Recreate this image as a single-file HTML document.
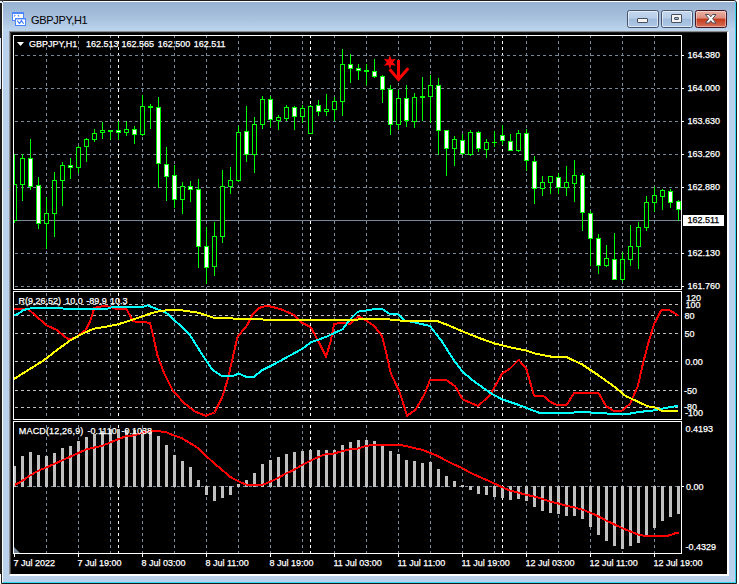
<!DOCTYPE html>
<html><head><meta charset="utf-8"><title>GBPJPY,H1</title>
<style>
html,body{margin:0;padding:0;background:#ffffff;}
body{width:739px;height:584px;overflow:hidden;position:relative;font-family:"Liberation Sans",sans-serif;}
#win{position:absolute;left:1px;top:0;width:736px;height:584px;box-sizing:border-box;background:#b9d1ea;border:1px solid #1c1c1c;border-radius:3px 3px 0 0;overflow:hidden;}
#win .hl{position:absolute;left:0;top:0;right:0;bottom:0;border:1px solid #fff;border-right-color:#35d6f0;border-bottom-color:#35d6f0;border-radius:2px 2px 0 0;}
#cap{position:absolute;left:1px;top:1px;right:1px;height:29px;background:linear-gradient(#97b2d2,#a9c2de 60%,#bdd5ee);}
#title{position:absolute;left:31px;top:12px;font-size:11px;letter-spacing:-0.3px;color:#000;line-height:16px;white-space:nowrap;}
#client{position:absolute;left:9px;top:31px;width:720px;height:545px;background:#000;box-sizing:border-box;border-left:1px solid #909090;border-top:1px solid #8a8a8a;border-right:2px solid #fff;border-bottom:2px solid #fff;}
.btn{position:absolute;top:10px;width:32px;height:18px;box-sizing:border-box;border:1px solid #46556f;border-radius:2.5px;background:linear-gradient(#c3d6ee 0,#b7cde9 45%,#9fbbdc 50%,#b0c8e6 100%);box-shadow:inset 0 0 0 1px rgba(255,255,255,.55);}
#bclose{border-color:#431422;background:linear-gradient(#eab2a4 0,#dc8c7c 45%,#c5391a 50%,#d6705a 100%);box-shadow:inset 0 0 0 1px rgba(255,255,255,.4);}
.g{position:absolute;box-sizing:border-box;border:1px solid #4a4f5e;background:#f4f4f4;border-radius:1px;}
</style></head><body>
<div id="win"><div class="hl"></div><div id="cap"></div></div>
<div id="client"></div>
<div style="position:absolute;left:10px;top:32px;width:1px;height:542px;background:#444"></div><div style="position:absolute;left:10px;top:32px;width:717px;height:1px;background:#1e1e1e"></div>
<div style="position:absolute;left:0;top:0;width:1px;height:584px;background:#1c1c1c"></div><div style="position:absolute;left:0;top:38px;width:1px;height:51px;background:#dfeaf8"></div><div style="position:absolute;left:0;top:574px;width:1px;height:10px;background:#fff"></div><div style="position:absolute;left:0;top:1px;width:2px;height:2px;background:#dfeaf8"></div><div style="position:absolute;left:0;top:0;width:4px;height:1px;background:#3a3a3a"></div><div style="position:absolute;left:2px;top:1px;width:1px;height:1px;background:#3a3a3a"></div>
<svg width="16" height="16" style="position:absolute;left:11px;top:11px" shape-rendering="crispEdges">
<rect x="1" y="1" width="12" height="9" fill="#fff" stroke="none"/>
<rect x="1.5" y="1.5" width="11" height="8" fill="none" stroke="#4a86ff"/>
<rect x="1" y="1" width="12" height="2" fill="#4a86ff"/>
<rect x="4" y="7" width="11" height="8" fill="#fff"/>
<rect x="4.5" y="7.5" width="10" height="7" fill="none" stroke="#4a86ff"/>
<rect x="4" y="8" width="11" height="1" fill="#4a86ff" opacity="0.45"/>
<path d="M6.3,9.6 L8.4,12.6 L10.4,9.6 L12.6,12.8" fill="none" stroke="#3a78ff" stroke-width="1.1" shape-rendering="auto"/>
<path d="M3,5.5 L4.2,4.2 M7,4.2 L8.2,5.5" fill="none" stroke="#3a78ff" stroke-width="1.1" shape-rendering="auto"/>
</svg>
<div id="title">GBPJPY,H1</div>
<div class="btn" id="bmin" style="left:627px"><div class="g" style="left:9px;top:7px;width:11px;height:5px"></div></div>
<div class="btn" id="bmax" style="left:661px"><div class="g" style="left:9px;top:3px;width:11px;height:9px"></div><div class="g" style="left:12px;top:6px;width:5px;height:3px;background:#9db9dc"></div></div>
<div class="btn" id="bclose" style="left:695px"><svg width="30" height="16" style="position:absolute;left:0;top:0"><path d="M9.5,3.5 L13,3.5 L14.75,5.8 L16.5,3.5 L20,3.5 L16.6,7.75 L20,12 L16.5,12 L14.75,9.7 L13,12 L9.5,12 L12.9,7.75 Z" fill="#fff" stroke="#4a4f5e" stroke-width="1" stroke-linejoin="round"/></svg></div>
<svg id="chart" width="739" height="584" viewBox="0 0 739 584" style="position:absolute;left:0;top:0">
<defs>
<clipPath id="cpM"><rect x="14" y="36" width="667" height="253"/></clipPath>
<clipPath id="cp1"><rect x="14" y="292" width="667" height="127"/></clipPath>
<clipPath id="cp2"><rect x="14" y="422" width="667" height="131"/></clipPath>
</defs>
<g shape-rendering="crispEdges" stroke-width="1" fill="none">
<line x1="46.5" x2="46.5" y1="36" y2="289" stroke="#778899" stroke-dasharray="3 3" stroke-dashoffset="1"/>
<line x1="78.5" x2="78.5" y1="36" y2="289" stroke="#778899" stroke-dasharray="3 3" stroke-dashoffset="1"/>
<line x1="110.5" x2="110.5" y1="36" y2="289" stroke="#778899" stroke-dasharray="3 3" stroke-dashoffset="1"/>
<line x1="142.5" x2="142.5" y1="36" y2="289" stroke="#778899" stroke-dasharray="3 3" stroke-dashoffset="1"/>
<line x1="174.5" x2="174.5" y1="36" y2="289" stroke="#778899" stroke-dasharray="3 3" stroke-dashoffset="1"/>
<line x1="206.5" x2="206.5" y1="36" y2="289" stroke="#778899" stroke-dasharray="3 3" stroke-dashoffset="1"/>
<line x1="238.5" x2="238.5" y1="36" y2="289" stroke="#778899" stroke-dasharray="3 3" stroke-dashoffset="1"/>
<line x1="270.5" x2="270.5" y1="36" y2="289" stroke="#778899" stroke-dasharray="3 3" stroke-dashoffset="1"/>
<line x1="302.5" x2="302.5" y1="36" y2="289" stroke="#778899" stroke-dasharray="3 3" stroke-dashoffset="1"/>
<line x1="334.5" x2="334.5" y1="36" y2="289" stroke="#778899" stroke-dasharray="3 3" stroke-dashoffset="1"/>
<line x1="366.5" x2="366.5" y1="36" y2="289" stroke="#778899" stroke-dasharray="3 3" stroke-dashoffset="1"/>
<line x1="398.5" x2="398.5" y1="36" y2="289" stroke="#778899" stroke-dasharray="3 3" stroke-dashoffset="1"/>
<line x1="430.5" x2="430.5" y1="36" y2="289" stroke="#778899" stroke-dasharray="3 3" stroke-dashoffset="1"/>
<line x1="462.5" x2="462.5" y1="36" y2="289" stroke="#778899" stroke-dasharray="3 3" stroke-dashoffset="1"/>
<line x1="494.5" x2="494.5" y1="36" y2="289" stroke="#778899" stroke-dasharray="3 3" stroke-dashoffset="1"/>
<line x1="526.5" x2="526.5" y1="36" y2="289" stroke="#778899" stroke-dasharray="3 3" stroke-dashoffset="1"/>
<line x1="558.5" x2="558.5" y1="36" y2="289" stroke="#778899" stroke-dasharray="3 3" stroke-dashoffset="1"/>
<line x1="590.5" x2="590.5" y1="36" y2="289" stroke="#778899" stroke-dasharray="3 3" stroke-dashoffset="1"/>
<line x1="622.5" x2="622.5" y1="36" y2="289" stroke="#778899" stroke-dasharray="3 3" stroke-dashoffset="1"/>
<line x1="654.5" x2="654.5" y1="36" y2="289" stroke="#778899" stroke-dasharray="3 3" stroke-dashoffset="1"/>
<line x1="118.5" x2="118.5" y1="36" y2="289" stroke="#ffffff" stroke-dasharray="3 3" stroke-dashoffset="1"/>
<line x1="310.5" x2="310.5" y1="36" y2="289" stroke="#ffffff" stroke-dasharray="3 3" stroke-dashoffset="1"/>
<line x1="502.5" x2="502.5" y1="36" y2="289" stroke="#ffffff" stroke-dasharray="3 3" stroke-dashoffset="1"/>
<line x1="46.5" x2="46.5" y1="292" y2="419" stroke="#778899" stroke-dasharray="3 3" stroke-dashoffset="5"/>
<line x1="78.5" x2="78.5" y1="292" y2="419" stroke="#778899" stroke-dasharray="3 3" stroke-dashoffset="5"/>
<line x1="110.5" x2="110.5" y1="292" y2="419" stroke="#778899" stroke-dasharray="3 3" stroke-dashoffset="5"/>
<line x1="142.5" x2="142.5" y1="292" y2="419" stroke="#778899" stroke-dasharray="3 3" stroke-dashoffset="5"/>
<line x1="174.5" x2="174.5" y1="292" y2="419" stroke="#778899" stroke-dasharray="3 3" stroke-dashoffset="5"/>
<line x1="206.5" x2="206.5" y1="292" y2="419" stroke="#778899" stroke-dasharray="3 3" stroke-dashoffset="5"/>
<line x1="238.5" x2="238.5" y1="292" y2="419" stroke="#778899" stroke-dasharray="3 3" stroke-dashoffset="5"/>
<line x1="270.5" x2="270.5" y1="292" y2="419" stroke="#778899" stroke-dasharray="3 3" stroke-dashoffset="5"/>
<line x1="302.5" x2="302.5" y1="292" y2="419" stroke="#778899" stroke-dasharray="3 3" stroke-dashoffset="5"/>
<line x1="334.5" x2="334.5" y1="292" y2="419" stroke="#778899" stroke-dasharray="3 3" stroke-dashoffset="5"/>
<line x1="366.5" x2="366.5" y1="292" y2="419" stroke="#778899" stroke-dasharray="3 3" stroke-dashoffset="5"/>
<line x1="398.5" x2="398.5" y1="292" y2="419" stroke="#778899" stroke-dasharray="3 3" stroke-dashoffset="5"/>
<line x1="430.5" x2="430.5" y1="292" y2="419" stroke="#778899" stroke-dasharray="3 3" stroke-dashoffset="5"/>
<line x1="462.5" x2="462.5" y1="292" y2="419" stroke="#778899" stroke-dasharray="3 3" stroke-dashoffset="5"/>
<line x1="494.5" x2="494.5" y1="292" y2="419" stroke="#778899" stroke-dasharray="3 3" stroke-dashoffset="5"/>
<line x1="526.5" x2="526.5" y1="292" y2="419" stroke="#778899" stroke-dasharray="3 3" stroke-dashoffset="5"/>
<line x1="558.5" x2="558.5" y1="292" y2="419" stroke="#778899" stroke-dasharray="3 3" stroke-dashoffset="5"/>
<line x1="590.5" x2="590.5" y1="292" y2="419" stroke="#778899" stroke-dasharray="3 3" stroke-dashoffset="5"/>
<line x1="622.5" x2="622.5" y1="292" y2="419" stroke="#778899" stroke-dasharray="3 3" stroke-dashoffset="5"/>
<line x1="654.5" x2="654.5" y1="292" y2="419" stroke="#778899" stroke-dasharray="3 3" stroke-dashoffset="5"/>
<line x1="118.5" x2="118.5" y1="292" y2="419" stroke="#ffffff" stroke-dasharray="3 3" stroke-dashoffset="5"/>
<line x1="310.5" x2="310.5" y1="292" y2="419" stroke="#ffffff" stroke-dasharray="3 3" stroke-dashoffset="5"/>
<line x1="502.5" x2="502.5" y1="292" y2="419" stroke="#ffffff" stroke-dasharray="3 3" stroke-dashoffset="5"/>
<line x1="46.5" x2="46.5" y1="422" y2="553" stroke="#778899" stroke-dasharray="3 3" stroke-dashoffset="3"/>
<line x1="78.5" x2="78.5" y1="422" y2="553" stroke="#778899" stroke-dasharray="3 3" stroke-dashoffset="3"/>
<line x1="110.5" x2="110.5" y1="422" y2="553" stroke="#778899" stroke-dasharray="3 3" stroke-dashoffset="3"/>
<line x1="142.5" x2="142.5" y1="422" y2="553" stroke="#778899" stroke-dasharray="3 3" stroke-dashoffset="3"/>
<line x1="174.5" x2="174.5" y1="422" y2="553" stroke="#778899" stroke-dasharray="3 3" stroke-dashoffset="3"/>
<line x1="206.5" x2="206.5" y1="422" y2="553" stroke="#778899" stroke-dasharray="3 3" stroke-dashoffset="3"/>
<line x1="238.5" x2="238.5" y1="422" y2="553" stroke="#778899" stroke-dasharray="3 3" stroke-dashoffset="3"/>
<line x1="270.5" x2="270.5" y1="422" y2="553" stroke="#778899" stroke-dasharray="3 3" stroke-dashoffset="3"/>
<line x1="302.5" x2="302.5" y1="422" y2="553" stroke="#778899" stroke-dasharray="3 3" stroke-dashoffset="3"/>
<line x1="334.5" x2="334.5" y1="422" y2="553" stroke="#778899" stroke-dasharray="3 3" stroke-dashoffset="3"/>
<line x1="366.5" x2="366.5" y1="422" y2="553" stroke="#778899" stroke-dasharray="3 3" stroke-dashoffset="3"/>
<line x1="398.5" x2="398.5" y1="422" y2="553" stroke="#778899" stroke-dasharray="3 3" stroke-dashoffset="3"/>
<line x1="430.5" x2="430.5" y1="422" y2="553" stroke="#778899" stroke-dasharray="3 3" stroke-dashoffset="3"/>
<line x1="462.5" x2="462.5" y1="422" y2="553" stroke="#778899" stroke-dasharray="3 3" stroke-dashoffset="3"/>
<line x1="494.5" x2="494.5" y1="422" y2="553" stroke="#778899" stroke-dasharray="3 3" stroke-dashoffset="3"/>
<line x1="526.5" x2="526.5" y1="422" y2="553" stroke="#778899" stroke-dasharray="3 3" stroke-dashoffset="3"/>
<line x1="558.5" x2="558.5" y1="422" y2="553" stroke="#778899" stroke-dasharray="3 3" stroke-dashoffset="3"/>
<line x1="590.5" x2="590.5" y1="422" y2="553" stroke="#778899" stroke-dasharray="3 3" stroke-dashoffset="3"/>
<line x1="622.5" x2="622.5" y1="422" y2="553" stroke="#778899" stroke-dasharray="3 3" stroke-dashoffset="3"/>
<line x1="654.5" x2="654.5" y1="422" y2="553" stroke="#778899" stroke-dasharray="3 3" stroke-dashoffset="3"/>
<line x1="118.5" x2="118.5" y1="422" y2="553" stroke="#ffffff" stroke-dasharray="3 3" stroke-dashoffset="3"/>
<line x1="310.5" x2="310.5" y1="422" y2="553" stroke="#ffffff" stroke-dasharray="3 3" stroke-dashoffset="3"/>
<line x1="502.5" x2="502.5" y1="422" y2="553" stroke="#ffffff" stroke-dasharray="3 3" stroke-dashoffset="3"/>
<line x1="15" x2="681" y1="55.5" y2="55.5" stroke="#778899" stroke-dasharray="3 3"/>
<line x1="15" x2="681" y1="88.5" y2="88.5" stroke="#778899" stroke-dasharray="3 3"/>
<line x1="15" x2="681" y1="121.5" y2="121.5" stroke="#778899" stroke-dasharray="3 3"/>
<line x1="15" x2="681" y1="154.5" y2="154.5" stroke="#778899" stroke-dasharray="3 3"/>
<line x1="15" x2="681" y1="187.5" y2="187.5" stroke="#778899" stroke-dasharray="3 3"/>
<line x1="15" x2="681" y1="253.5" y2="253.5" stroke="#778899" stroke-dasharray="3 3"/>
<line x1="15" x2="681" y1="286.5" y2="286.5" stroke="#778899" stroke-dasharray="3 3"/>
<line x1="15" x2="681" y1="304.5" y2="304.5" stroke="#c0c0c0" stroke-dasharray="3 3"/>
<line x1="15" x2="681" y1="315.5" y2="315.5" stroke="#c0c0c0" stroke-dasharray="3 3"/>
<line x1="15" x2="681" y1="333.5" y2="333.5" stroke="#c0c0c0" stroke-dasharray="3 3"/>
<line x1="15" x2="681" y1="361.5" y2="361.5" stroke="#c0c0c0" stroke-dasharray="3 3"/>
<line x1="15" x2="681" y1="390.5" y2="390.5" stroke="#c0c0c0" stroke-dasharray="3 3"/>
<line x1="15" x2="681" y1="407.5" y2="407.5" stroke="#c0c0c0" stroke-dasharray="3 3"/>
<line x1="15" x2="681" y1="486.5" y2="486.5" stroke="#778899" stroke-dasharray="3 3"/>
<line x1="14" x2="681" y1="220.5" y2="220.5" stroke="#778899"/>
</g>
<g shape-rendering="crispEdges" clip-path="url(#cpM)">
<rect x="14" y="154" width="1" height="69" fill="#00ff00"/>
<rect x="12" y="184" width="5" height="37" fill="#00ff00"/>
<rect x="13" y="185" width="3" height="35" fill="#000000"/>
<rect x="22" y="154" width="1" height="47" fill="#00ff00"/>
<rect x="20" y="158" width="5" height="27" fill="#00ff00"/>
<rect x="21" y="159" width="3" height="25" fill="#000000"/>
<rect x="30" y="139" width="1" height="51" fill="#00ff00"/>
<rect x="28" y="158" width="5" height="29" fill="#00ff00"/>
<rect x="29" y="159" width="3" height="27" fill="#ffffff"/>
<rect x="38" y="177" width="1" height="52" fill="#00ff00"/>
<rect x="36" y="185" width="5" height="39" fill="#00ff00"/>
<rect x="37" y="186" width="3" height="37" fill="#ffffff"/>
<rect x="46" y="197" width="1" height="52" fill="#00ff00"/>
<rect x="44" y="213" width="5" height="11" fill="#00ff00"/>
<rect x="45" y="214" width="3" height="9" fill="#000000"/>
<rect x="54" y="172" width="1" height="65" fill="#00ff00"/>
<rect x="52" y="180" width="5" height="34" fill="#00ff00"/>
<rect x="53" y="181" width="3" height="32" fill="#000000"/>
<rect x="62" y="162" width="1" height="44" fill="#00ff00"/>
<rect x="60" y="165" width="5" height="16" fill="#00ff00"/>
<rect x="61" y="166" width="3" height="14" fill="#000000"/>
<rect x="70" y="158" width="1" height="21" fill="#00ff00"/>
<rect x="68" y="165" width="5" height="3" fill="#00ff00"/>
<rect x="69" y="166" width="3" height="1" fill="#ffffff"/>
<rect x="78" y="146" width="1" height="27" fill="#00ff00"/>
<rect x="76" y="147" width="5" height="21" fill="#00ff00"/>
<rect x="77" y="148" width="3" height="19" fill="#000000"/>
<rect x="86" y="138" width="1" height="24" fill="#00ff00"/>
<rect x="84" y="139" width="5" height="8" fill="#00ff00"/>
<rect x="85" y="140" width="3" height="6" fill="#000000"/>
<rect x="94" y="129" width="1" height="13" fill="#00ff00"/>
<rect x="92" y="133" width="5" height="7" fill="#00ff00"/>
<rect x="93" y="134" width="3" height="5" fill="#000000"/>
<rect x="102" y="122" width="1" height="17" fill="#00ff00"/>
<rect x="100" y="130" width="5" height="3" fill="#00ff00"/>
<rect x="101" y="131" width="3" height="1" fill="#000000"/>
<rect x="110" y="130" width="1" height="10" fill="#00ff00"/>
<rect x="108" y="130" width="5" height="2" fill="#00ff00"/>
<rect x="118" y="121" width="1" height="19" fill="#00ff00"/>
<rect x="116" y="130" width="5" height="3" fill="#00ff00"/>
<rect x="117" y="131" width="3" height="1" fill="#ffffff"/>
<rect x="126" y="121" width="1" height="15" fill="#00ff00"/>
<rect x="124" y="129" width="5" height="4" fill="#00ff00"/>
<rect x="125" y="130" width="3" height="2" fill="#000000"/>
<rect x="134" y="126" width="1" height="18" fill="#00ff00"/>
<rect x="132" y="129" width="5" height="6" fill="#00ff00"/>
<rect x="133" y="130" width="3" height="4" fill="#ffffff"/>
<rect x="142" y="95" width="1" height="41" fill="#00ff00"/>
<rect x="140" y="106" width="5" height="29" fill="#00ff00"/>
<rect x="141" y="107" width="3" height="27" fill="#000000"/>
<rect x="150" y="104" width="1" height="25" fill="#00ff00"/>
<rect x="148" y="106" width="5" height="2" fill="#00ff00"/>
<rect x="158" y="97" width="1" height="91" fill="#00ff00"/>
<rect x="156" y="107" width="5" height="57" fill="#00ff00"/>
<rect x="157" y="108" width="3" height="55" fill="#ffffff"/>
<rect x="166" y="147" width="1" height="54" fill="#00ff00"/>
<rect x="164" y="164" width="5" height="13" fill="#00ff00"/>
<rect x="165" y="165" width="3" height="11" fill="#ffffff"/>
<rect x="174" y="165" width="1" height="43" fill="#00ff00"/>
<rect x="172" y="175" width="5" height="25" fill="#00ff00"/>
<rect x="173" y="176" width="3" height="23" fill="#ffffff"/>
<rect x="182" y="182" width="1" height="32" fill="#00ff00"/>
<rect x="180" y="186" width="5" height="14" fill="#00ff00"/>
<rect x="181" y="187" width="3" height="12" fill="#000000"/>
<rect x="190" y="181" width="1" height="21" fill="#00ff00"/>
<rect x="188" y="186" width="5" height="4" fill="#00ff00"/>
<rect x="189" y="187" width="3" height="2" fill="#ffffff"/>
<rect x="198" y="179" width="1" height="89" fill="#00ff00"/>
<rect x="196" y="189" width="5" height="58" fill="#00ff00"/>
<rect x="197" y="190" width="3" height="56" fill="#ffffff"/>
<rect x="206" y="227" width="1" height="57" fill="#00ff00"/>
<rect x="204" y="246" width="5" height="22" fill="#00ff00"/>
<rect x="205" y="247" width="3" height="20" fill="#ffffff"/>
<rect x="214" y="222" width="1" height="54" fill="#00ff00"/>
<rect x="212" y="236" width="5" height="31" fill="#00ff00"/>
<rect x="213" y="237" width="3" height="29" fill="#000000"/>
<rect x="222" y="170" width="1" height="73" fill="#00ff00"/>
<rect x="220" y="186" width="5" height="51" fill="#00ff00"/>
<rect x="221" y="187" width="3" height="49" fill="#000000"/>
<rect x="230" y="167" width="1" height="27" fill="#00ff00"/>
<rect x="228" y="180" width="5" height="7" fill="#00ff00"/>
<rect x="229" y="181" width="3" height="5" fill="#000000"/>
<rect x="238" y="126" width="1" height="56" fill="#00ff00"/>
<rect x="236" y="132" width="5" height="49" fill="#00ff00"/>
<rect x="237" y="133" width="3" height="47" fill="#000000"/>
<rect x="246" y="106" width="1" height="56" fill="#00ff00"/>
<rect x="244" y="131" width="5" height="24" fill="#00ff00"/>
<rect x="245" y="132" width="3" height="22" fill="#ffffff"/>
<rect x="254" y="117" width="1" height="56" fill="#00ff00"/>
<rect x="252" y="124" width="5" height="31" fill="#00ff00"/>
<rect x="253" y="125" width="3" height="29" fill="#000000"/>
<rect x="262" y="96" width="1" height="33" fill="#00ff00"/>
<rect x="260" y="99" width="5" height="26" fill="#00ff00"/>
<rect x="261" y="100" width="3" height="24" fill="#000000"/>
<rect x="270" y="96" width="1" height="31" fill="#00ff00"/>
<rect x="268" y="99" width="5" height="21" fill="#00ff00"/>
<rect x="269" y="100" width="3" height="19" fill="#ffffff"/>
<rect x="278" y="115" width="1" height="15" fill="#00ff00"/>
<rect x="276" y="117" width="5" height="4" fill="#00ff00"/>
<rect x="277" y="118" width="3" height="2" fill="#000000"/>
<rect x="286" y="105" width="1" height="16" fill="#00ff00"/>
<rect x="284" y="107" width="5" height="12" fill="#00ff00"/>
<rect x="285" y="108" width="3" height="10" fill="#000000"/>
<rect x="294" y="106" width="1" height="24" fill="#00ff00"/>
<rect x="292" y="107" width="5" height="10" fill="#00ff00"/>
<rect x="293" y="108" width="3" height="8" fill="#ffffff"/>
<rect x="302" y="105" width="1" height="18" fill="#00ff00"/>
<rect x="300" y="108" width="5" height="9" fill="#00ff00"/>
<rect x="301" y="109" width="3" height="7" fill="#000000"/>
<rect x="310" y="105" width="1" height="29" fill="#00ff00"/>
<rect x="308" y="106" width="5" height="28" fill="#00ff00"/>
<rect x="309" y="107" width="3" height="26" fill="#000000"/>
<rect x="318" y="100" width="1" height="16" fill="#00ff00"/>
<rect x="316" y="105" width="5" height="7" fill="#00ff00"/>
<rect x="317" y="106" width="3" height="5" fill="#ffffff"/>
<rect x="326" y="94" width="1" height="22" fill="#00ff00"/>
<rect x="324" y="109" width="5" height="3" fill="#00ff00"/>
<rect x="325" y="110" width="3" height="1" fill="#000000"/>
<rect x="334" y="97" width="1" height="24" fill="#00ff00"/>
<rect x="332" y="101" width="5" height="9" fill="#00ff00"/>
<rect x="333" y="102" width="3" height="7" fill="#000000"/>
<rect x="342" y="49" width="1" height="67" fill="#00ff00"/>
<rect x="340" y="64" width="5" height="38" fill="#00ff00"/>
<rect x="341" y="65" width="3" height="36" fill="#000000"/>
<rect x="350" y="54" width="1" height="29" fill="#00ff00"/>
<rect x="348" y="64" width="5" height="5" fill="#00ff00"/>
<rect x="349" y="65" width="3" height="3" fill="#ffffff"/>
<rect x="358" y="64" width="1" height="16" fill="#00ff00"/>
<rect x="356" y="68" width="5" height="3" fill="#00ff00"/>
<rect x="357" y="69" width="3" height="1" fill="#ffffff"/>
<rect x="366" y="64" width="1" height="21" fill="#00ff00"/>
<rect x="364" y="70" width="5" height="2" fill="#00ff00"/>
<rect x="374" y="59" width="1" height="19" fill="#00ff00"/>
<rect x="372" y="71" width="5" height="6" fill="#00ff00"/>
<rect x="373" y="72" width="3" height="4" fill="#ffffff"/>
<rect x="382" y="75" width="1" height="28" fill="#00ff00"/>
<rect x="380" y="76" width="5" height="14" fill="#00ff00"/>
<rect x="381" y="77" width="3" height="12" fill="#ffffff"/>
<rect x="390" y="85" width="1" height="50" fill="#00ff00"/>
<rect x="388" y="89" width="5" height="36" fill="#00ff00"/>
<rect x="389" y="90" width="3" height="34" fill="#ffffff"/>
<rect x="398" y="90" width="1" height="40" fill="#00ff00"/>
<rect x="396" y="98" width="5" height="27" fill="#00ff00"/>
<rect x="397" y="99" width="3" height="25" fill="#000000"/>
<rect x="406" y="85" width="1" height="42" fill="#00ff00"/>
<rect x="404" y="98" width="5" height="23" fill="#00ff00"/>
<rect x="405" y="99" width="3" height="21" fill="#ffffff"/>
<rect x="414" y="93" width="1" height="35" fill="#00ff00"/>
<rect x="412" y="97" width="5" height="25" fill="#00ff00"/>
<rect x="413" y="98" width="3" height="23" fill="#000000"/>
<rect x="422" y="77" width="1" height="44" fill="#00ff00"/>
<rect x="420" y="96" width="5" height="2" fill="#00ff00"/>
<rect x="430" y="75" width="1" height="48" fill="#00ff00"/>
<rect x="428" y="85" width="5" height="12" fill="#00ff00"/>
<rect x="429" y="86" width="3" height="10" fill="#000000"/>
<rect x="438" y="78" width="1" height="77" fill="#00ff00"/>
<rect x="436" y="85" width="5" height="46" fill="#00ff00"/>
<rect x="437" y="86" width="3" height="44" fill="#ffffff"/>
<rect x="446" y="130" width="1" height="46" fill="#00ff00"/>
<rect x="444" y="130" width="5" height="19" fill="#00ff00"/>
<rect x="445" y="131" width="3" height="17" fill="#ffffff"/>
<rect x="454" y="136" width="1" height="30" fill="#00ff00"/>
<rect x="452" y="139" width="5" height="10" fill="#00ff00"/>
<rect x="453" y="140" width="3" height="8" fill="#000000"/>
<rect x="462" y="134" width="1" height="21" fill="#00ff00"/>
<rect x="460" y="140" width="5" height="14" fill="#00ff00"/>
<rect x="461" y="141" width="3" height="12" fill="#ffffff"/>
<rect x="470" y="130" width="1" height="26" fill="#00ff00"/>
<rect x="468" y="132" width="5" height="23" fill="#00ff00"/>
<rect x="469" y="133" width="3" height="21" fill="#000000"/>
<rect x="478" y="131" width="1" height="21" fill="#00ff00"/>
<rect x="476" y="132" width="5" height="17" fill="#00ff00"/>
<rect x="477" y="133" width="3" height="15" fill="#ffffff"/>
<rect x="486" y="139" width="1" height="19" fill="#00ff00"/>
<rect x="484" y="142" width="5" height="8" fill="#00ff00"/>
<rect x="485" y="143" width="3" height="6" fill="#000000"/>
<rect x="494" y="131" width="1" height="16" fill="#00ff00"/>
<rect x="492" y="142" width="5" height="1" fill="#00ff00"/>
<rect x="502" y="125" width="1" height="20" fill="#00ff00"/>
<rect x="500" y="135" width="5" height="6" fill="#00ff00"/>
<rect x="501" y="136" width="3" height="4" fill="#ffffff"/>
<rect x="510" y="134" width="1" height="17" fill="#00ff00"/>
<rect x="508" y="141" width="5" height="10" fill="#00ff00"/>
<rect x="509" y="142" width="3" height="8" fill="#ffffff"/>
<rect x="518" y="130" width="1" height="22" fill="#00ff00"/>
<rect x="516" y="133" width="5" height="18" fill="#00ff00"/>
<rect x="517" y="134" width="3" height="16" fill="#000000"/>
<rect x="526" y="129" width="1" height="42" fill="#00ff00"/>
<rect x="524" y="133" width="5" height="28" fill="#00ff00"/>
<rect x="525" y="134" width="3" height="26" fill="#ffffff"/>
<rect x="534" y="156" width="1" height="48" fill="#00ff00"/>
<rect x="532" y="161" width="5" height="28" fill="#00ff00"/>
<rect x="533" y="162" width="3" height="26" fill="#ffffff"/>
<rect x="542" y="176" width="1" height="20" fill="#00ff00"/>
<rect x="540" y="182" width="5" height="7" fill="#00ff00"/>
<rect x="541" y="183" width="3" height="5" fill="#000000"/>
<rect x="550" y="176" width="1" height="18" fill="#00ff00"/>
<rect x="548" y="176" width="5" height="7" fill="#00ff00"/>
<rect x="549" y="177" width="3" height="5" fill="#000000"/>
<rect x="558" y="173" width="1" height="21" fill="#00ff00"/>
<rect x="556" y="177" width="5" height="11" fill="#00ff00"/>
<rect x="557" y="178" width="3" height="9" fill="#ffffff"/>
<rect x="566" y="166" width="1" height="30" fill="#00ff00"/>
<rect x="564" y="182" width="5" height="6" fill="#00ff00"/>
<rect x="565" y="183" width="3" height="4" fill="#000000"/>
<rect x="574" y="160" width="1" height="42" fill="#00ff00"/>
<rect x="572" y="175" width="5" height="9" fill="#00ff00"/>
<rect x="573" y="176" width="3" height="7" fill="#000000"/>
<rect x="582" y="173" width="1" height="58" fill="#00ff00"/>
<rect x="580" y="175" width="5" height="38" fill="#00ff00"/>
<rect x="581" y="176" width="3" height="36" fill="#ffffff"/>
<rect x="590" y="211" width="1" height="55" fill="#00ff00"/>
<rect x="588" y="213" width="5" height="26" fill="#00ff00"/>
<rect x="589" y="214" width="3" height="24" fill="#ffffff"/>
<rect x="598" y="234" width="1" height="40" fill="#00ff00"/>
<rect x="596" y="238" width="5" height="28" fill="#00ff00"/>
<rect x="597" y="239" width="3" height="26" fill="#ffffff"/>
<rect x="606" y="245" width="1" height="22" fill="#00ff00"/>
<rect x="604" y="258" width="5" height="8" fill="#00ff00"/>
<rect x="605" y="259" width="3" height="6" fill="#000000"/>
<rect x="614" y="233" width="1" height="47" fill="#00ff00"/>
<rect x="612" y="259" width="5" height="21" fill="#00ff00"/>
<rect x="613" y="260" width="3" height="19" fill="#ffffff"/>
<rect x="622" y="252" width="1" height="30" fill="#00ff00"/>
<rect x="620" y="259" width="5" height="21" fill="#00ff00"/>
<rect x="621" y="260" width="3" height="19" fill="#000000"/>
<rect x="630" y="225" width="1" height="41" fill="#00ff00"/>
<rect x="628" y="246" width="5" height="14" fill="#00ff00"/>
<rect x="629" y="247" width="3" height="12" fill="#000000"/>
<rect x="638" y="222" width="1" height="47" fill="#00ff00"/>
<rect x="636" y="227" width="5" height="20" fill="#00ff00"/>
<rect x="637" y="228" width="3" height="18" fill="#000000"/>
<rect x="646" y="196" width="1" height="35" fill="#00ff00"/>
<rect x="644" y="202" width="5" height="26" fill="#00ff00"/>
<rect x="645" y="203" width="3" height="24" fill="#000000"/>
<rect x="654" y="187" width="1" height="25" fill="#00ff00"/>
<rect x="652" y="195" width="5" height="8" fill="#00ff00"/>
<rect x="653" y="196" width="3" height="6" fill="#000000"/>
<rect x="662" y="189" width="1" height="21" fill="#00ff00"/>
<rect x="660" y="190" width="5" height="7" fill="#00ff00"/>
<rect x="661" y="191" width="3" height="5" fill="#000000"/>
<rect x="670" y="189" width="1" height="19" fill="#00ff00"/>
<rect x="668" y="191" width="5" height="12" fill="#00ff00"/>
<rect x="669" y="192" width="3" height="10" fill="#ffffff"/>
<rect x="678" y="200" width="1" height="21" fill="#00ff00"/>
<rect x="676" y="201" width="5" height="9" fill="#00ff00"/>
<rect x="677" y="202" width="3" height="7" fill="#ffffff"/>
</g>
<polygon points="389.90,55.30 391.45,59.52 395.88,58.75 393.00,62.20 395.88,65.65 391.45,64.88 389.90,69.10 388.35,64.88 383.92,65.65 386.80,62.20 383.92,58.75 388.35,59.52" fill="#ff0000"/>
<path d="M398.5,60 L398.5,78.5 M389.6,69.2 L398.5,79.4 L408.2,68.2" stroke="#ff0000" stroke-width="3" fill="none" stroke-linejoin="miter"/>
<polyline points="14,309 28,309 34.6,314.6 46,325 56.4,329.8 68.7,339.6 76.3,337 85.8,329.8 90.5,320.3 94.3,308 102.8,306 110.4,306.7 116,309 126.5,309 133,321.3 142.6,322.2 149.9,322.7 153.2,335.8 157.5,355.6 164.1,373.1 172.9,390.6 183.8,402.7 194.8,411.5 205.8,415.8 214.5,412.5 222.2,397.2 227.7,379.7 233.2,355.6 237.5,336.9 247.4,324.9 252.9,313.9 259.5,307.8 267.1,305.6 280.3,309 294.2,315 301.9,322.7 310.7,327.1 318.4,341.3 326,356.7 330.4,342.4 334.1,323.8 343.6,322.7 350.1,323.8 357.8,316.8 362.2,317.9 374.2,326 381.9,335.8 386.3,353.4 390.7,373.1 399.5,391.7 407.1,415.8 415.9,409.3 424.7,393.9 429.9,380.1 446.3,380.1 455.1,386.2 462.7,399.4 478.1,406 490.1,395 502.2,373.5 509.9,368.7 518.6,359.9 526.3,368.7 534,395.5 542.7,395.5 551.5,402.7 557,404.9 566.6,404.9 574.2,392.8 598.4,392.8 606,406 613.7,411 621.4,411 630.1,403.8 637.8,386.2 643.3,362.1 648.8,341.3 654.2,323.8 661.3,310.2 669.6,310.2 678.4,315.7" stroke="#ff0000" stroke-width="2" fill="none" stroke-linejoin="round" shape-rendering="crispEdges" clip-path="url(#cp1)"/>
<polyline points="14,315.2 18.5,313.7 23.3,310 31.8,308 62,308 64,309 106.6,309 112.3,307 142.6,307 147.7,305.4 155.3,308.4 166.3,312.8 178.4,323.8 190.4,335.8 201.4,353.4 212.3,369.8 222.2,376.4 232.1,376.4 238.6,373.5 246.3,376.8 254,376.8 262.7,369.8 275.9,363.2 280,361 301.9,349 310.7,342.4 326,336.9 342.5,329.3 350.1,319.4 357.8,311.7 367.7,310.2 376.4,308.9 381.9,308.9 389.6,313.9 397.3,313.9 404.9,320.5 415.9,322.7 429.9,326 441.9,341.3 452.9,358.8 462.7,372 474.8,381.9 490.1,392.8 502.2,399.4 518.6,404.9 538.4,412.5 574,412.5 575.3,411.5 589.6,411.5 590.7,412.5 606,412.5 607,413.6 630,413.6 637.8,412.1 654.2,410.4 669.6,407.1 678.4,406" stroke="#00ffff" stroke-width="2" fill="none" stroke-linejoin="round" shape-rendering="crispEdges" clip-path="url(#cp1)"/>
<polyline points="14,379 28.9,369.6 44.1,360.1 57.4,349.7 70.6,340.2 82,334 93.4,328.8 104.7,326.9 118.9,324.1 133.1,319.4 140,317.2 151,313.3 161.9,310.6 179.5,310 199.2,312.8 214.5,317.9 238.6,318.7 271.5,319.8 356.7,319.8 361,318.7 382,318.7 399.5,320.5 437.5,321.2 448.5,325.3 462.7,331.5 478.1,337.6 494.5,343.5 509.9,347.2 526.3,350.5 536.2,353.8 551.5,356.7 566.6,357.1 581.9,364.3 598.4,375.3 613.7,386.2 625.8,396.1 637.8,401.6 647.7,406.4 654.2,407.1 661.9,411 678.4,411" stroke="#ffff00" stroke-width="2" fill="none" stroke-linejoin="round" shape-rendering="crispEdges" clip-path="url(#cp1)"/>
<g shape-rendering="crispEdges" clip-path="url(#cp2)" fill="#c0c0c0">
<rect x="13" y="466" width="3" height="21"/>
<rect x="21" y="456" width="3" height="31"/>
<rect x="29" y="452" width="3" height="35"/>
<rect x="37" y="455" width="3" height="32"/>
<rect x="45" y="456" width="3" height="31"/>
<rect x="53" y="453" width="3" height="34"/>
<rect x="61" y="448" width="3" height="39"/>
<rect x="69" y="446" width="3" height="41"/>
<rect x="77" y="441" width="3" height="46"/>
<rect x="85" y="437" width="3" height="50"/>
<rect x="93" y="434" width="3" height="53"/>
<rect x="101" y="431" width="3" height="56"/>
<rect x="109" y="429" width="3" height="58"/>
<rect x="117" y="429" width="3" height="58"/>
<rect x="125" y="430" width="3" height="57"/>
<rect x="133" y="430" width="3" height="57"/>
<rect x="141" y="430" width="3" height="57"/>
<rect x="149" y="431" width="3" height="56"/>
<rect x="157" y="436" width="3" height="51"/>
<rect x="165" y="445" width="3" height="42"/>
<rect x="173" y="455" width="3" height="32"/>
<rect x="181" y="461" width="3" height="26"/>
<rect x="189" y="467" width="3" height="20"/>
<rect x="197" y="480" width="3" height="7"/>
<rect x="205" y="486" width="3" height="9"/>
<rect x="213" y="486" width="3" height="15"/>
<rect x="221" y="486" width="3" height="12"/>
<rect x="229" y="486" width="3" height="9"/>
<rect x="237" y="484" width="3" height="3"/>
<rect x="245" y="480" width="3" height="7"/>
<rect x="253" y="473" width="3" height="14"/>
<rect x="261" y="464" width="3" height="23"/>
<rect x="269" y="460" width="3" height="27"/>
<rect x="277" y="457" width="3" height="30"/>
<rect x="285" y="454" width="3" height="33"/>
<rect x="293" y="452" width="3" height="35"/>
<rect x="301" y="451" width="3" height="36"/>
<rect x="309" y="450" width="3" height="37"/>
<rect x="317" y="450" width="3" height="37"/>
<rect x="325" y="450" width="3" height="37"/>
<rect x="333" y="450" width="3" height="37"/>
<rect x="341" y="445" width="3" height="42"/>
<rect x="349" y="442" width="3" height="45"/>
<rect x="357" y="440" width="3" height="47"/>
<rect x="365" y="440" width="3" height="47"/>
<rect x="373" y="441" width="3" height="46"/>
<rect x="381" y="445" width="3" height="42"/>
<rect x="389" y="451" width="3" height="36"/>
<rect x="397" y="454" width="3" height="33"/>
<rect x="405" y="460" width="3" height="27"/>
<rect x="413" y="461" width="3" height="26"/>
<rect x="421" y="463" width="3" height="24"/>
<rect x="429" y="462" width="3" height="25"/>
<rect x="437" y="469" width="3" height="18"/>
<rect x="445" y="476" width="3" height="11"/>
<rect x="453" y="481" width="3" height="6"/>
<rect x="461" y="485" width="3" height="2"/>
<rect x="469" y="486" width="3" height="4"/>
<rect x="477" y="486" width="3" height="8"/>
<rect x="485" y="486" width="3" height="9"/>
<rect x="493" y="486" width="3" height="11"/>
<rect x="501" y="486" width="3" height="12"/>
<rect x="509" y="486" width="3" height="14"/>
<rect x="517" y="486" width="3" height="13"/>
<rect x="525" y="486" width="3" height="15"/>
<rect x="533" y="486" width="3" height="21"/>
<rect x="541" y="486" width="3" height="25"/>
<rect x="549" y="486" width="3" height="27"/>
<rect x="557" y="486" width="3" height="28"/>
<rect x="565" y="486" width="3" height="30"/>
<rect x="573" y="486" width="3" height="30"/>
<rect x="581" y="486" width="3" height="33"/>
<rect x="589" y="486" width="3" height="41"/>
<rect x="597" y="486" width="3" height="49"/>
<rect x="605" y="486" width="3" height="55"/>
<rect x="613" y="486" width="3" height="60"/>
<rect x="621" y="486" width="3" height="63"/>
<rect x="629" y="486" width="3" height="60"/>
<rect x="637" y="486" width="3" height="57"/>
<rect x="645" y="486" width="3" height="50"/>
<rect x="653" y="486" width="3" height="42"/>
<rect x="661" y="486" width="3" height="35"/>
<rect x="669" y="486" width="3" height="31"/>
<rect x="677" y="486" width="3" height="28"/>
</g>
<polyline points="14.8,485 22,481 30,475.6 38,470.8 46,467.6 62,460.4 78,453.2 86,449.5 102,445.8 110,442.6 126,436 134,435.4 142,432.8 150,431 158,431 166,432.2 174,435.5 182,438.3 190,443.1 198,448.1 206,455.7 214,463.3 222,469.8 230,476.8 238,481.1 246,484.6 254,485 262,485 270,481.8 278,478.1 286,473.5 294,469.8 302,465 310,460.9 318,457.2 326,454 334,453.5 342,451.3 350,449.2 358,448.5 366,445.9 374,444.8 398,444.8 406,445.9 414,448.1 422,449.8 430,452.9 438,456.1 446,460.5 454,464.4 462,468 470,472.5 478,476.3 486,479.7 494,483.4 502,487.1 510,490.6 518,492.6 526,494.7 534,496.5 542,498.7 550,501.5 558,503.4 566,505.6 574,507.3 582,509.5 590,512.5 598,516.2 606,520.4 614,524.3 622,528 630,531.3 638,534.5 646,536 666,536 670,535.2 674.6,533.4 678.6,533" stroke="#ff0000" stroke-width="2" fill="none" stroke-linejoin="round" shape-rendering="crispEdges" clip-path="url(#cp2)"/>
<polygon points="14,547 14,553 20,553" fill="#778899"/>
<g shape-rendering="crispEdges" fill="none" stroke="#ffffff" stroke-width="1">
<rect x="13.5" y="35.5" width="668" height="254"/>
<rect x="13.5" y="291.5" width="668" height="128"/>
<rect x="13.5" y="421.5" width="668" height="132"/>
</g>
<g shape-rendering="crispEdges" fill="#ffffff">
<rect x="682" y="55" width="2" height="1"/>
<rect x="682" y="88" width="2" height="1"/>
<rect x="682" y="121" width="2" height="1"/>
<rect x="682" y="154" width="2" height="1"/>
<rect x="682" y="187" width="2" height="1"/>
<rect x="682" y="253" width="2" height="1"/>
<rect x="682" y="286" width="2" height="1"/>
<rect x="682" y="486" width="2" height="1"/>
<rect x="14" y="554" width="1" height="3"/>
<rect x="78" y="554" width="1" height="3"/>
<rect x="142" y="554" width="1" height="3"/>
<rect x="206" y="554" width="1" height="3"/>
<rect x="270" y="554" width="1" height="3"/>
<rect x="334" y="554" width="1" height="3"/>
<rect x="398" y="554" width="1" height="3"/>
<rect x="462" y="554" width="1" height="3"/>
<rect x="526" y="554" width="1" height="3"/>
<rect x="590" y="554" width="1" height="3"/>
<rect x="654" y="554" width="1" height="3"/>
<rect x="683" y="215" width="41" height="11" fill="#ffffff"/>
</g>
<polygon points="17,42 24,42 20.5,46" fill="#ffffff"/>
<g font-family="Liberation Sans, sans-serif" font-size="9px" fill="#ffffff" stroke="#ffffff" stroke-width="0.25">
<text x="29" y="47">GBPJPY,H1</text>
<text x="86" y="47">162.513</text>
<text x="121.6" y="47">162.565</text>
<text x="157.7" y="47">162.500</text>
<text x="193.7" y="47">162.511</text>
<text x="18.5" y="303.7">R(9,26,52)</text>
<text x="65.2" y="303.7">10.0</text>
<text x="86.3" y="303.7">-89.9</text>
<text x="110.1" y="303.7">10.3</text>
<text x="18.8" y="433.7" textLength="64.5">MACD(12,26,9)</text>
<text x="87.5" y="433.7">-0.1110</text>
<text x="121.6" y="433.7">-0.1038</text>
<text x="687.5" y="58.4">164.380</text>
<text x="687.5" y="91.4">164.000</text>
<text x="687.5" y="124.4">163.630</text>
<text x="687.5" y="157.4">163.260</text>
<text x="687.5" y="190.4">162.880</text>
<text x="687.5" y="256.4">162.130</text>
<text x="687.5" y="289.4">161.760</text>
<text x="687.5" y="223.4" fill="#000000" stroke="#000000">162.511</text>
<text x="686" y="301.3">120</text>
<text x="685.5" y="308.0">100</text>
<text x="684.5" y="319.0">80</text>
<text x="684.5" y="336.7">50</text>
<text x="685.3" y="365.0">0.00</text>
<text x="684" y="393.90000000000003">-50</text>
<text x="684" y="410.3">-80</text>
<text x="685" y="416.1">-100</text>
<text x="685.5" y="432.1">0.4193</text>
<text x="686" y="490.0">0.00</text>
<text x="685.5" y="549.9">-0.4329</text>
<text x="13.5" y="565.7">7 Jul 2022</text>
<text x="77.5" y="565.7">7 Jul 19:00</text>
<text x="141.5" y="565.7">8 Jul 03:00</text>
<text x="205.5" y="565.7">8 Jul 11:00</text>
<text x="269.5" y="565.7">8 Jul 19:00</text>
<text x="333.5" y="565.7">11 Jul 03:00</text>
<text x="397.5" y="565.7">11 Jul 11:00</text>
<text x="461.5" y="565.7">11 Jul 19:00</text>
<text x="525.5" y="565.7">12 Jul 03:00</text>
<text x="589.5" y="565.7">12 Jul 11:00</text>
<text x="653.5" y="565.7">12 Jul 19:00</text>
</g>
</svg>
</body></html>
